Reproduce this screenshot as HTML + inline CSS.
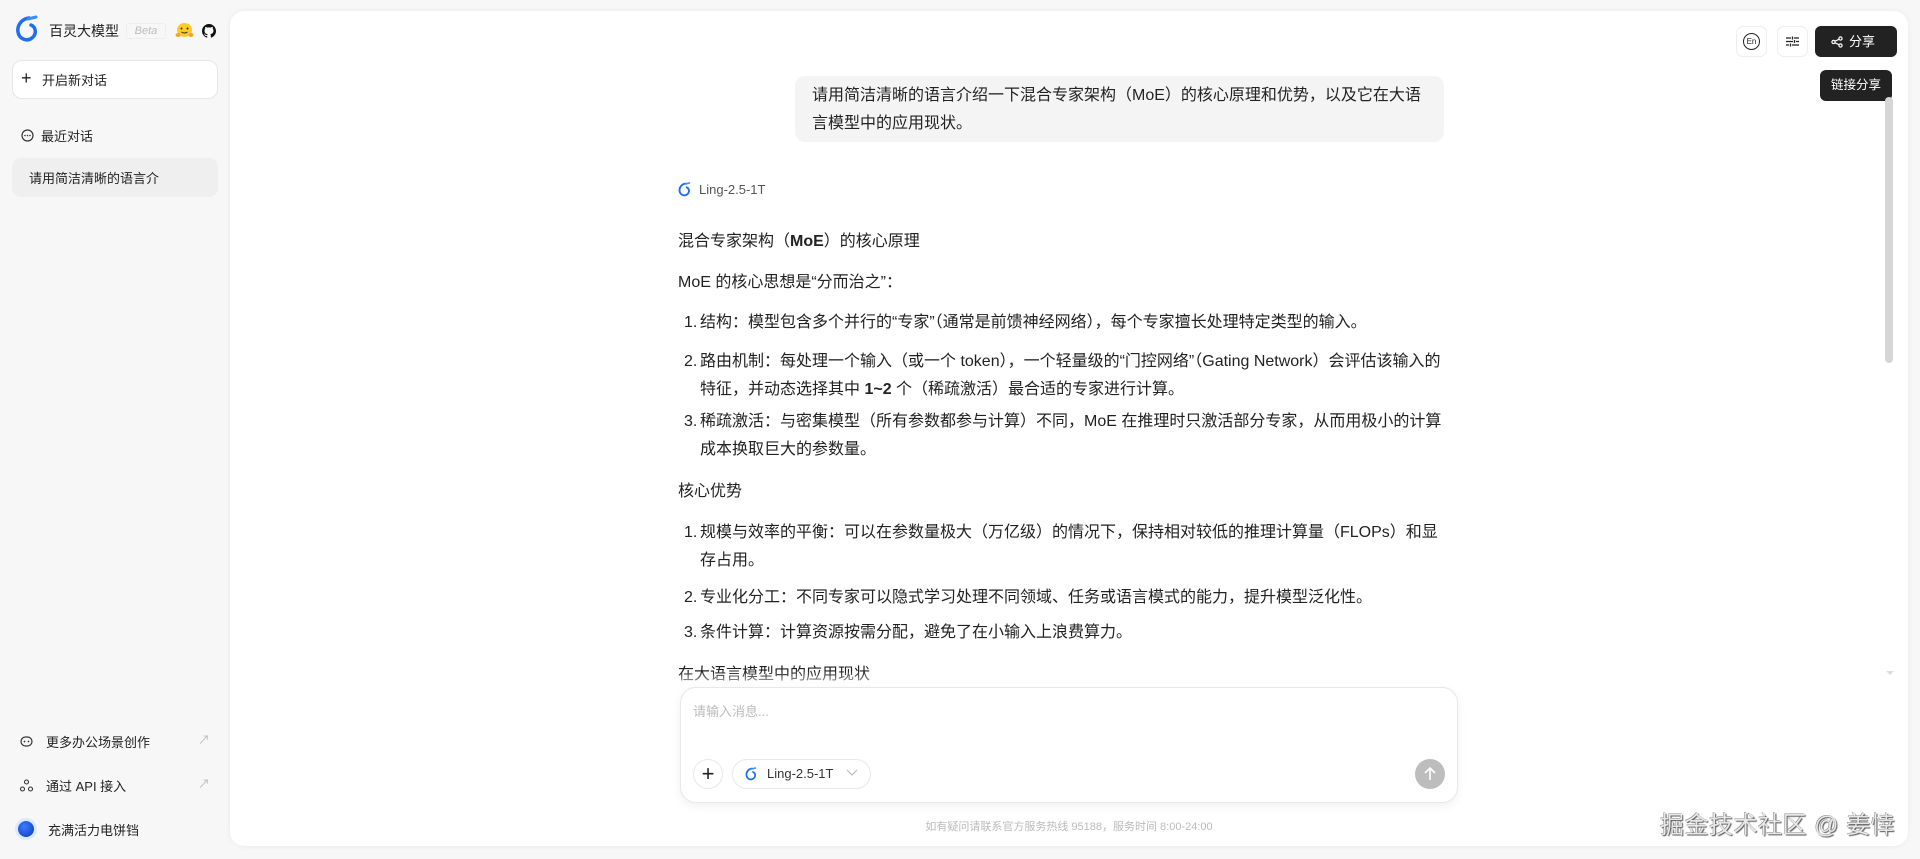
<!DOCTYPE html>
<html><head><meta charset="utf-8"><style>
*{box-sizing:border-box;margin:0;padding:0}
body{width:1920px;height:859px;overflow:hidden;background:#f7f7f8;font-family:"Liberation Sans","Noto Sans CJK SC",sans-serif;color:#222;position:relative}
.abs{position:absolute}
.side-t{font-size:14px;color:#222}
.panel{position:absolute;left:230px;top:11px;width:1678px;height:835px;background:#fff;border-radius:14px;box-shadow:0 0 6px rgba(0,0,0,.06);overflow:hidden}
.content{position:absolute;left:448px;top:0;width:766px;font-size:16px;line-height:28px;color:#222}
.content p{position:absolute;left:0;white-space:nowrap}
.li{position:absolute;left:0;padding-left:22px;width:766px}
.li b.n{position:absolute;left:6px;font-weight:normal}
</style></head><body>
<svg class="abs" style="left:15px;top:15px" width="24" height="28" viewBox="0 0 24 28"><path d="M14 3 C6 4 2 11 3 17 C4 24 12 27 17 23 C22 19 21 12 16 10" fill="none" stroke="#1e6ff0" stroke-width="3.5" stroke-linecap="round"/><path d="M13 4 L21 2" stroke="#3a8cff" stroke-width="3" stroke-linecap="round"/></svg>
<div class="abs side-t" style="left:49px;top:21px;font-size:14px">百灵大模型</div>
<div class="abs" style="left:126px;top:23px;width:40px;height:16px;border:1px solid #eee;border-radius:3px;font-size:11px;font-style:italic;color:#bbb;text-align:center;line-height:14px">Beta</div>
<svg class="abs" style="left:175px;top:22px" width="19" height="17" viewBox="0 0 19 17"><ellipse cx="9.5" cy="8" rx="7.5" ry="7" fill="#ffc928"/><circle cx="6.5" cy="6.5" r="1" fill="#333"/><circle cx="12.5" cy="6.5" r="1" fill="#333"/><path d="M6.5 10Q9.5 12 12.5 10" stroke="#333" fill="none" stroke-width="1"/><ellipse cx="3" cy="13" rx="2.5" ry="2" fill="#f5a623"/><ellipse cx="16" cy="13" rx="2.5" ry="2" fill="#f5a623"/></svg>
<svg class="abs" style="left:202px;top:24px" width="14" height="14" viewBox="0 0 16 16"><path fill="#111" d="M8 0C3.6 0 0 3.6 0 8c0 3.5 2.3 6.5 5.5 7.6.4.1.5-.2.5-.4v-1.4c-2.2.5-2.7-1-2.7-1-.4-.9-.9-1.2-.9-1.2-.7-.5.1-.5.1-.5.8.1 1.2.8 1.2.8.7 1.3 1.9.9 2.3.7.1-.5.3-.9.5-1.1-1.8-.2-3.6-.9-3.6-4 0-.9.3-1.6.8-2.1-.1-.2-.4-1 .1-2.1 0 0 .7-.2 2.2.8.6-.2 1.3-.3 2-.3s1.4.1 2 .3c1.5-1 2.2-.8 2.2-.8.4 1.1.2 1.9.1 2.1.5.6.8 1.3.8 2.1 0 3.1-1.9 3.7-3.6 3.9.3.3.6.8.6 1.5v2.2c0 .2.1.5.6.4C13.7 14.5 16 11.5 16 8c0-4.4-3.6-8-8-8z"/></svg>
<div class="abs" style="left:12px;top:60px;width:206px;height:39px;border:1px solid #e6e6e6;border-radius:10px;background:#fff"></div>
<div class="abs side-t" style="left:21px;top:69px;font-size:18px;line-height:18px">+</div>
<div class="abs side-t" style="left:42px;top:70px;font-size:13px">开启新对话</div>
<svg class="abs" style="left:21px;top:129px" width="13" height="13" viewBox="0 0 13 13"><circle cx="6.5" cy="6.5" r="5.5" fill="none" stroke="#333" stroke-width="1.2"/><circle cx="4" cy="6.5" r=".8" fill="#333"/><circle cx="6.5" cy="6.5" r=".8" fill="#333"/><circle cx="9" cy="6.5" r=".8" fill="#333"/></svg>
<div class="abs side-t" style="left:41px;top:126px;font-size:13px">最近对话</div>
<div class="abs" style="left:12px;top:158px;width:206px;height:39px;background:#efefef;border-radius:9px"></div>
<div class="abs side-t" style="left:29px;top:168px;font-size:13px">请用简洁清晰的语言介</div>
<svg class="abs" style="left:20px;top:735px" width="13" height="13" viewBox="0 0 13 13"><rect x="1" y="2" width="11" height="9" rx="4.5" fill="none" stroke="#333" stroke-width="1.2"/><circle cx="4.5" cy="6.5" r=".9" fill="#333"/><circle cx="8.5" cy="6.5" r=".9" fill="#333"/></svg>
<div class="abs side-t" style="left:46px;top:732px;font-size:13px">更多办公场景创作</div>
<div class="abs" style="left:198px;top:731px;color:#bbb;font-size:12px">↗</div>
<svg class="abs" style="left:20px;top:779px" width="13" height="13" viewBox="0 0 13 13"><g fill="none" stroke="#333" stroke-width="1.1"><circle cx="6.5" cy="3" r="2"/><circle cx="2.5" cy="10" r="2"/><circle cx="10.5" cy="10" r="2"/></g></svg>
<div class="abs side-t" style="left:46px;top:776px;font-size:13px">通过 API 接入</div>
<div class="abs" style="left:198px;top:775px;color:#bbb;font-size:12px">↗</div>
<div class="abs" style="left:15px;top:818px;width:22px;height:22px;border-radius:50%;background:#dbe9ff"></div>
<div class="abs" style="left:18px;top:821px;width:16px;height:16px;border-radius:50%;background:radial-gradient(circle at 40% 35%,#3b7dff,#0b36b8)"></div>
<div class="abs side-t" style="left:48px;top:820px;font-size:13px">充满活力电饼铛</div>

<div class="panel">
 <div class="abs" style="left:1506px;top:15px;width:31px;height:31px;border:1px solid #eee;border-radius:7px"></div>
 <div class="abs" style="left:1513px;top:22px;width:17px;height:17px;border:1.3px solid #222;border-radius:50%;font-size:8px;line-height:15px;text-align:center">En</div>
 <div class="abs" style="left:1547px;top:15px;width:31px;height:31px;border:1px solid #eee;border-radius:7px"></div>
 <svg class="abs" style="left:1555px;top:23px" width="15" height="15" viewBox="0 0 15 15"><g stroke="#222" stroke-width="1.3"><path d="M1 4H6M9 4H14M1 7.5H8M11 7.5H14M1 11H4M7 11H14"/><path d="M7.5 2.5V5.5M9.5 6V9M5.5 9.5V12.5"/></g></svg>
 <div class="abs" style="left:1585px;top:15px;width:82px;height:31px;background:#222;border-radius:6px;color:#fff;font-size:13px;line-height:31px;padding-left:34px">分享</div>
 <svg class="abs" style="left:1601px;top:25px" width="12" height="12" viewBox="0 0 12 12"><g fill="none" stroke="#fff" stroke-width="1.2"><circle cx="9.5" cy="2.5" r="1.6"/><circle cx="2.5" cy="6" r="1.6"/><circle cx="9.5" cy="9.5" r="1.6"/><path d="M4 5.2L8 3.3M4 6.8L8 8.7"/></g></svg>
 <div class="abs" style="left:1624px;top:54px;width:0;height:0;border:5px solid transparent;border-bottom-color:#222"></div>
 <div class="abs" style="left:1590px;top:59px;width:72px;height:31px;background:#222;border-radius:6px;color:#fff;font-size:12.5px;line-height:31px;text-align:center">链接分享</div>
 <div class="abs" style="left:1655px;top:86px;width:8px;height:266px;background:#d6d6d6;border-radius:4px"></div>
 <div class="abs" style="left:1656px;top:660px;width:0;height:0;border:4px solid transparent;border-top-color:#ddd"></div>

 <div class="abs" style="left:565px;top:65px;width:649px;height:66px;background:#f4f4f4;border-radius:10px;padding:6px 16px 0 17px;font-size:16px;line-height:28px;color:#222">请用简洁清晰的语言介绍一下混合专家架构（MoE）的核心原理和优势，以及它在大语言模型中的应用现状。</div>

 <div class="content">
  <svg class="abs" style="left:0;top:170px" width="13" height="17" viewBox="0 0 24 28"><path d="M14 3 C6 4 2 11 3 17 C4 24 12 27 17 23 C22 19 21 12 16 10" fill="none" stroke="#1e6ff0" stroke-width="3.5" stroke-linecap="round"/><path d="M13 4 L21 2" stroke="#3a8cff" stroke-width="3" stroke-linecap="round"/></svg>
  <p style="left:21px;top:165px;font-size:13px;color:#555">Ling-2.5-1T</p>
  <p style="top:217px">混合专家架构（<b>MoE</b>）的核心原理</p>
  <p style="top:258px">MoE 的核心思想是“分而治之”：</p>
  <div class="li" style="top:298px"><b class="n">1.</b>结构：模型包含多个并行的“专家”（通常是前馈神经网络），每个专家擅长处理特定类型的输入。</div>
  <div class="li" style="top:337px"><b class="n">2.</b>路由机制：每处理一个输入（或一个 token），一个轻量级的“门控网络”（Gating Network）会评估该输入的特征，并动态选择其中 <b>1~2</b> 个（稀疏激活）最合适的专家进行计算。</div>
  <div class="li" style="top:397px"><b class="n">3.</b>稀疏激活：与密集模型（所有参数都参与计算）不同，MoE 在推理时只激活部分专家，从而用极小的计算成本换取巨大的参数量。</div>
  <p style="top:467px">核心优势</p>
  <div class="li" style="top:508px"><b class="n">1.</b>规模与效率的平衡：可以在参数量极大（万亿级）的情况下，保持相对较低的推理计算量（FLOPs）和显存占用。</div>
  <div class="li" style="top:573px"><b class="n">2.</b>专业化分工：不同专家可以隐式学习处理不同领域、任务或语言模式的能力，提升模型泛化性。</div>
  <div class="li" style="top:608px"><b class="n">3.</b>条件计算：计算资源按需分配，避免了在小输入上浪费算力。</div>
  <p style="top:650px">在大语言模型中的应用现状</p>
 </div>
 <div class="abs" style="left:440px;top:660px;width:800px;height:20px;background:linear-gradient(rgba(255,255,255,0),#fff)"></div>

 <div class="abs" style="left:450px;top:676px;width:778px;height:116px;background:#fff;border:1px solid #e8e8e8;border-radius:16px;box-shadow:0 3px 10px rgba(0,0,0,.06)"></div>
 <div class="abs" style="left:463px;top:690px;font-size:13px;color:#bbb">请输入消息...</div>
 <div class="abs" style="left:463px;top:748px;width:30px;height:30px;border:1px solid #e8e8e8;border-radius:50%;text-align:center;font-size:22px;line-height:27px;color:#222">+</div>
 <div class="abs" style="left:502px;top:748px;width:139px;height:30px;border:1px solid #e8e8e8;border-radius:15px"></div>
 <svg class="abs" style="left:515px;top:755px" width="12" height="16" viewBox="0 0 24 28"><path d="M14 3 C6 4 2 11 3 17 C4 24 12 27 17 23 C22 19 21 12 16 10" fill="none" stroke="#1e6ff0" stroke-width="3.5" stroke-linecap="round"/><path d="M13 4 L21 2" stroke="#3a8cff" stroke-width="3" stroke-linecap="round"/></svg>
 <div class="abs" style="left:537px;top:755px;font-size:13px;color:#333">Ling-2.5-1T</div>
 <svg class="abs" style="left:616px;top:758px" width="12" height="8" viewBox="0 0 12 8"><path d="M1 1L6 6L11 1" fill="none" stroke="#bbb" stroke-width="1.2"/></svg>
 <div class="abs" style="left:1185px;top:748px;width:30px;height:30px;border-radius:50%;background:#bdbdbd"></div>
 <svg class="abs" style="left:1192px;top:755px" width="16" height="16" viewBox="0 0 16 16"><path d="M8 14V2M3 7L8 2L13 7" fill="none" stroke="#fff" stroke-width="1.6"/></svg>
 <div class="abs" style="left:0;width:1678px;top:807px;text-align:center;font-size:11px;color:#bbb">如有疑问请联系官方服务热线 95188，服务时间 8:00-24:00</div>
</div>
<div class="abs" style="left:1660px;top:805px;font-size:24px;color:#e8e8e8;text-shadow:1px 1px 1px #555,-0.5px -0.5px 0 #888;letter-spacing:0.5px">掘金技术社区 @ 姜悻</div>
</body></html>
